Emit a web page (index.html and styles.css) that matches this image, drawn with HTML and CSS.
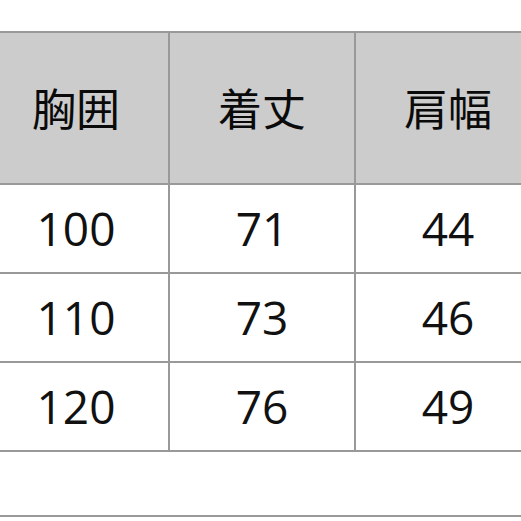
FILE: index.html
```html
<!DOCTYPE html>
<html lang="ja">
<head>
<meta charset="utf-8">
<link rel="stylesheet" href="styles.css">
</head>
<body>
<div class="size-table">
  <div class="cell head">胸囲</div>
  <div class="cell head">着丈</div>
  <div class="cell head">肩幅</div>
  <div class="cell num">100</div>
  <div class="cell num">71</div>
  <div class="cell num">44</div>
  <div class="cell num">110</div>
  <div class="cell num">73</div>
  <div class="cell num">46</div>
  <div class="cell num">120</div>
  <div class="cell num">76</div>
  <div class="cell num">49</div>
  <div class="cell note"></div>
</div>
</body>
</html>
```
FILE: styles.css
```css
html, body {
  margin: 0;
  padding: 0;
  background: #ffffff;
}
body {
  font-family: "Open Sans", "Noto Sans", "Noto Sans CJK JP", sans-serif;
  color: #111111;
  overflow: hidden;
}
.size-table {
  display: grid;
  grid-template-columns: repeat(3, 186px);
  grid-template-rows: 152px 89px 89px 89px 67px;
  margin-top: 31px;
  margin-left: -18px;
  width: 560px;
}
.cell {
  box-sizing: border-box;
  border-top: 2px solid #999999;
  border-left: 2px solid #999999;
  display: flex;
  align-items: center;
  justify-content: center;
}
.head {
  background: #cccccc;
  font-family: "Noto Sans CJK JP", sans-serif;
  font-size: 44px;
  padding-bottom: 2px;
  color: #0a0a0a;
}
.num {
  font-size: 46px;
  font-weight: 400;
  line-height: 1;
  padding-bottom: 2px;
}
.note {
  grid-column: 1 / span 3;
  border-bottom: 2px solid #999999;
}
```
